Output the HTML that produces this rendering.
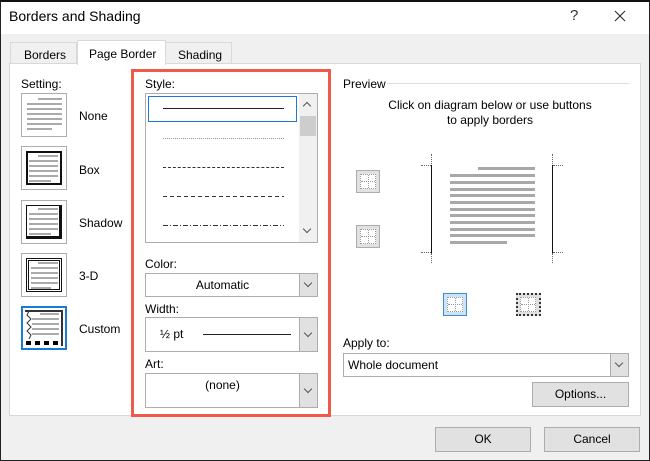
<!DOCTYPE html>
<html><head><style>
*{box-sizing:border-box;margin:0;padding:0}
body{width:650px;height:461px;overflow:hidden;font-family:"Liberation Sans",sans-serif;font-size:12px;color:#000;background:#f0f0f0;position:relative}
.a{position:absolute}
#frame{left:0;top:0;width:650px;height:461px;border:1px solid #222;border-top:2px solid #111}
.title{left:1px;top:2px;width:648px;height:32px;background:#fff}
.cb{background:#fff;border:1px solid #adadad}
.dd{position:absolute;right:0;top:0;bottom:0;width:18px;background:#e1e1e1;border-left:1px solid #adadad}
.dd:after{content:"";position:absolute;left:5px;top:50%;margin-top:-5px;width:5px;height:5px;border-right:1px solid #555;border-bottom:1px solid #555;transform:rotate(45deg)}
.btn{background:#e1e1e1;border:1px solid #adadad;text-align:center}
.ic{background:#fff;border:1px solid #adadad}
.ln{position:absolute;height:2px;background:#aaa}
.pl{position:absolute;height:3px;background:#a8a8a8}
.sb{background:#e1e1e1;border:1px solid #adadad}
.gr{position:absolute;left:3px;top:3px;width:16px;height:15px;border:1px dotted #999;background:#fff}
.gr:before{content:"";position:absolute;left:7px;top:0;bottom:0;border-left:1px dotted #999}
.gr:after{content:"";position:absolute;top:6px;left:0;right:0;border-top:1px dotted #999}
.ch{position:absolute;width:6px;height:6px;border-right:1px solid #555;border-bottom:1px solid #555}
</style></head><body>
<div class="a title"></div>
<div class="a" style="left:9px;top:8px;font-size:14px">Borders and Shading</div>
<div class="a" style="left:570px;top:7px;font-size:15px;color:#333">?</div>
<svg class="a" style="left:614px;top:10px" width="12" height="12"><path d="M1 1L11 11M11 1L1 11" stroke="#333" stroke-width="1.2"/></svg>
<!-- tabs -->
<div class="a" style="left:10px;top:42px;width:67px;height:22px;background:#f0f0f0;border:1px solid #d9d9d9;border-bottom:none"></div>
<div class="a" style="left:24px;top:48px">Borders</div>
<div class="a" style="left:165px;top:42px;width:67px;height:22px;border:1px solid #d9d9d9;border-bottom:none"></div>
<div class="a" style="left:178px;top:48px">Shading</div>
<div class="a" style="left:9px;top:63px;width:632px;height:353px;background:#fff;border:1px solid #d9d9d9"></div>
<div class="a" style="left:77px;top:40px;width:89px;height:25px;background:#fff;border:1px solid #d9d9d9;border-bottom:none"></div>
<div class="a" style="left:89px;top:47px">Page Border</div>
<!-- setting -->
<div class="a" style="left:21px;top:77px">Setting:</div>
<div class="a ic" style="left:21px;top:93px;width:46px;height:44px"></div>
<div class="a" style="left:79px;top:109px">None</div>
<div class="a ic" style="left:21px;top:146px;width:46px;height:44px"><div class="a" style="left:4px;top:4px;width:36px;height:34px;border:2px solid #111"></div></div>
<div class="a" style="left:79px;top:163px">Box</div>
<div class="a ic" style="left:21px;top:200px;width:46px;height:44px"><div class="a" style="left:4px;top:4px;width:36px;height:34px;border:1px solid #111;border-right:3px solid #111;border-bottom:3px solid #111"></div></div>
<div class="a" style="left:79px;top:216px">Shadow</div>
<div class="a ic" style="left:21px;top:253px;width:46px;height:44px"><div class="a" style="left:4px;top:4px;width:36px;height:34px;border:3px double #111"></div></div>
<div class="a" style="left:79px;top:269px">3-D</div>
<div class="a ic" style="left:21px;top:306px;width:46px;height:44px;border:2px solid #1c7ad6"><div class="a" style="left:2px;top:2px;width:38px;height:36px;border-right:2px solid #333;border-top:2px solid #333"></div>
<svg class="a" style="left:3px;top:3px" width="6" height="30"><path d="M3 0L1 4L5 8L1 12L5 16L1 20L5 24L3 28" stroke="#333" fill="none" stroke-width="1"/></svg>
<div class="a" style="left:3px;top:33px;width:36px;height:4px;background:repeating-linear-gradient(90deg,#000 0 5px,transparent 5px 9px)"></div></div>
<div class="a" style="left:79px;top:322px">Custom</div>
<!-- red box -->
<div class="a" style="left:131px;top:69px;width:200px;height:348px;border:3px solid #f05a4c"></div>
<div class="a" style="left:145px;top:77px">Style:</div>
<div class="a cb" style="left:145px;top:93px;width:173px;height:150px">
<div class="a" style="left:2px;top:2px;width:149px;height:26px;border:1px solid #1c7ad6"></div>
<div class="a" style="left:17px;top:14px;width:121px;height:1px;background:#222"></div>
<div class="a" style="left:17px;top:44px;width:121px;border-top:1px dotted #999"></div>
<div class="a" style="left:17px;top:73px;width:121px;border-top:1px dashed #333"></div>
<div class="a" style="left:17px;top:102px;width:121px;height:1px;background:repeating-linear-gradient(90deg,#333 0 4px,transparent 4px 7px)"></div>
<div class="a" style="left:17px;top:131px;width:121px;height:1px;background:repeating-linear-gradient(90deg,#333 0 5px,transparent 5px 7px,#333 7px 8px,transparent 8px 10px)"></div>
<div class="a" style="right:0;top:0;width:18px;height:148px;background:#f0f0f0"></div>
<div class="a" style="right:1px;top:22px;width:16px;height:20px;background:#cdcdcd"></div>
<div class="ch" style="left:158px;top:9px;transform:rotate(225deg)"></div>
<div class="ch" style="left:158px;top:132px;transform:rotate(45deg)"></div>
</div>
<div class="a" style="left:145px;top:257px">Color:</div>
<div class="a cb" style="left:145px;top:273px;width:173px;height:24px"><div class="a" style="left:0;right:18px;top:4px;text-align:center">Automatic</div><div class="dd"></div></div>
<div class="a" style="left:145px;top:302px">Width:</div>
<div class="a cb" style="left:145px;top:317px;width:173px;height:35px"><div class="a" style="left:14px;top:9px">½ pt</div><div class="a" style="left:57px;top:16px;width:88px;height:1px;background:#222"></div><div class="dd"></div></div>
<div class="a" style="left:145px;top:357px">Art:</div>
<div class="a cb" style="left:145px;top:373px;width:173px;height:35px"><div class="a" style="left:0;right:18px;top:4px;text-align:center">(none)</div><div class="dd"></div></div>
<!-- preview -->
<div class="a" style="left:343px;top:77px">Preview</div>
<div class="a" style="left:387px;top:83px;width:242px;height:1px;background:#ddd"></div>
<div class="a" style="left:343px;top:98px;width:294px;text-align:center;line-height:15px">Click on diagram below or use buttons<br>to apply borders</div>
<div class="a" style="left:431px;top:165px;width:1px;height:88px;background:#111"></div>
<div class="a" style="left:552px;top:165px;width:1px;height:88px;background:#111"></div>
<div class="a" style="left:431px;top:154px;height:10px;border-left:1px dotted #666"></div>
<div class="a" style="left:431px;top:253px;height:10px;border-left:1px dotted #666"></div>
<div class="a" style="left:552px;top:154px;height:10px;border-left:1px dotted #666"></div>
<div class="a" style="left:552px;top:253px;height:10px;border-left:1px dotted #666"></div>
<div class="a" style="left:421px;top:165px;width:10px;border-top:1px dotted #666"></div>
<div class="a" style="left:421px;top:252px;width:10px;border-top:1px dotted #666"></div>
<div class="a" style="left:553px;top:165px;width:10px;border-top:1px dotted #666"></div>
<div class="a" style="left:553px;top:252px;width:10px;border-top:1px dotted #666"></div>
<div class="pl" style="left:478px;top:167px;width:57px"></div>
<div class="pl" style="left:450px;top:174px;width:85px"></div>
<div class="pl" style="left:450px;top:181px;width:85px"></div>
<div class="pl" style="left:450px;top:188px;width:85px"></div>
<div class="pl" style="left:450px;top:194px;width:85px"></div>
<div class="pl" style="left:450px;top:201px;width:85px"></div>
<div class="pl" style="left:450px;top:208px;width:85px"></div>
<div class="pl" style="left:450px;top:214px;width:85px"></div>
<div class="pl" style="left:450px;top:221px;width:85px"></div>
<div class="pl" style="left:450px;top:228px;width:85px"></div>
<div class="pl" style="left:450px;top:234px;width:85px"></div>
<div class="pl" style="left:450px;top:241px;width:57px"></div>
<div class="a sb" style="left:356px;top:170px;width:24px;height:23px"><div class="gr"></div></div>
<div class="a sb" style="left:356px;top:225px;width:24px;height:23px"><div class="gr"></div></div>
<div class="a" style="left:443px;top:293px;width:24px;height:23px;background:#cce4f7;border:1px solid #3c8ad8"><div class="gr"></div></div>
<div class="a sb" style="left:516px;top:293px;width:25px;height:23px;border:2px dotted #333"><div class="gr" style="left:2px;top:2px"></div></div>
<div class="a" style="left:343px;top:336px">Apply to:</div>
<div class="a cb" style="left:343px;top:353px;width:286px;height:24px"><div class="a" style="left:4px;top:4px">Whole document</div><div class="dd"></div></div>
<div class="a btn" style="left:532px;top:382px;width:97px;height:25px;line-height:23px">Options...</div>
<div class="a btn" style="left:435px;top:427px;width:96px;height:25px;line-height:23px">OK</div>
<div class="a btn" style="left:544px;top:427px;width:96px;height:25px;line-height:23px">Cancel</div>
<!-- icon text lines -->
<div class="ln" style="left:38px;top:98px;width:24px"></div><div class="ln" style="left:27px;top:103px;width:35px"></div><div class="ln" style="left:27px;top:108px;width:35px"></div><div class="ln" style="left:27px;top:113px;width:35px"></div><div class="ln" style="left:27px;top:118px;width:35px"></div><div class="ln" style="left:27px;top:123px;width:35px"></div><div class="ln" style="left:27px;top:128px;width:25px"></div>
<div class="ln" style="left:38px;top:155px;width:20px"></div><div class="ln" style="left:29px;top:160px;width:29px"></div><div class="ln" style="left:29px;top:165px;width:29px"></div><div class="ln" style="left:29px;top:170px;width:29px"></div><div class="ln" style="left:29px;top:175px;width:29px"></div><div class="ln" style="left:29px;top:180px;width:22px"></div>
<div class="ln" style="left:38px;top:208px;width:20px"></div><div class="ln" style="left:29px;top:213px;width:29px"></div><div class="ln" style="left:29px;top:218px;width:29px"></div><div class="ln" style="left:29px;top:223px;width:29px"></div><div class="ln" style="left:29px;top:228px;width:29px"></div><div class="ln" style="left:29px;top:233px;width:22px"></div>
<div class="ln" style="left:38px;top:262px;width:20px"></div><div class="ln" style="left:31px;top:267px;width:27px"></div><div class="ln" style="left:31px;top:272px;width:27px"></div><div class="ln" style="left:31px;top:277px;width:27px"></div><div class="ln" style="left:31px;top:282px;width:27px"></div><div class="ln" style="left:31px;top:287px;width:20px"></div>
<div class="ln" style="left:40px;top:313px;width:19px"></div><div class="ln" style="left:32px;top:318px;width:27px"></div><div class="ln" style="left:32px;top:323px;width:27px"></div><div class="ln" style="left:32px;top:328px;width:27px"></div><div class="ln" style="left:32px;top:333px;width:27px"></div>
<div class="a" id="frame"></div>
</body></html>
